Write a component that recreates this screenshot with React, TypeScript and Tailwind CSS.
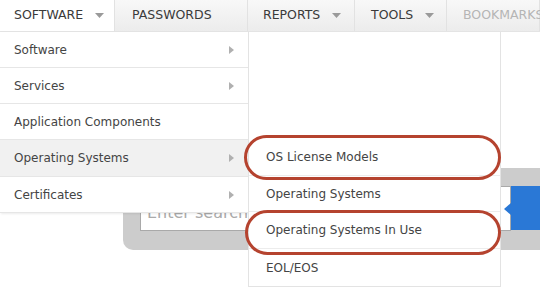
import React from "react";

const font = { fontFamily: '"DejaVu Sans", Verdana, sans-serif' };

function DownCaret() {
  return (
    <svg width="9" height="6" viewBox="0 0 9 6" className="ml-[12px]">
      <path d="M0 0 L9 0 L4.5 5 Z" fill="#9a9a9a" />
    </svg>
  );
}

function RightCaret() {
  return (
    <svg width="5" height="8" viewBox="0 0 5 8">
      <path d="M0 0 L5 4 L0 8 Z" fill="#b0b0b0" />
    </svg>
  );
}

function NavItem({
  label,
  caret,
  active,
  muted,
  width,
  pad,
}: {
  label: string;
  caret?: boolean;
  active?: boolean;
  muted?: boolean;
  width: string;
  pad: string;
}) {
  return (
    <div
      className={`flex items-center shrink-0 h-full border-r border-[#e2e2e2] ${pad} ${width} ${
        active ? "bg-white" : ""
      } ${muted ? "text-[#b5b5b5]" : "text-[#3a3a3a]"}`}
    >
      <span className="text-[12.5px] whitespace-nowrap">{label}</span>
      {caret && <DownCaret />}
    </div>
  );
}

const mainItems = [
  { label: "Software", sub: true, h: "h-[36px]" },
  { label: "Services", sub: true, h: "h-[36px]" },
  { label: "Application Components", sub: false, h: "h-[36px]" },
  { label: "Operating Systems", sub: true, h: "h-[37px]", hover: true },
  { label: "Certificates", sub: true, h: "h-[36px]" },
];

const subItems = [
  { label: "OS License Models", h: "h-[37px]" },
  { label: "Operating Systems", h: "h-[36px]" },
  { label: "Operating Systems In Use", h: "h-[37px]" },
  { label: "EOL/EOS", h: "h-[37px]" },
];

export default function App() {
  return (
    <div className="relative w-[540px] h-[295px] overflow-hidden bg-white" style={font}>
      {/* top navigation */}
      <div className="flex h-[32px] bg-gradient-to-b from-[#f8f8f8] to-[#ececec] border-b border-[#e4e4e4]">
        <NavItem label="SOFTWARE" caret active width="w-[115px]" pad="pl-[14px]" />
        <NavItem label="PASSWORDS" width="w-[133px]" pad="pl-[17px]" />
        <NavItem label="REPORTS" caret width="w-[107px]" pad="pl-[15px]" />
        <NavItem label="TOOLS" caret width="w-[92px]" pad="pl-[16px]" />
        <NavItem label="BOOKMARKS" muted width="w-[93px]" pad="pl-[16px]" />
      </div>

      {/* page content behind the menus */}
      <div className="pt-[136px] pl-[123px]">
        <div className="h-[82px] bg-[#cccccc] rounded-bl-[10px] pt-[18px] pl-[17px] flex">
          <div className="w-[380px] h-[45px] bg-white border border-[#a9a9a9] flex items-end pl-[6px] pb-[9px]">
            <span className="text-[16px] leading-[16px] text-[#aaa]">Enter search term</span>
          </div>
          <div className="relative w-[30px] h-[44px] bg-[#2a78d6]">
            <div className="absolute left-[-7px] top-[17px] w-0 h-0 border-y-[6px] border-y-transparent border-r-[7px] border-r-[#2a78d6]" />
          </div>
        </div>
      </div>

      {/* first level dropdown */}
      <div className="absolute left-0 top-[32px] w-[248px] bg-white shadow-[1px_1px_2px_rgba(0,0,0,0.08)]">
        {mainItems.map((it) => (
          <div
            key={it.label}
            className={`flex items-center justify-between pl-[14px] pr-[14px] border-b border-[#e6e6e6] text-[12px] text-[#444] ${it.h} ${
              it.hover ? "bg-[#f1f1f1]" : ""
            }`}
          >
            <span>{it.label}</span>
            {it.sub && <RightCaret />}
          </div>
        ))}
      </div>

      {/* second level dropdown */}
      <div className="absolute left-[248px] top-[32px] w-[253px] h-[255px] bg-white border-l border-r border-b border-[#e3e3e3] flex flex-col justify-end">
        {subItems.map((it, i) => (
          <div
            key={it.label}
            className={`flex items-center pl-[17px] text-[12px] text-[#444] ${it.h} ${
              i < subItems.length - 1 ? "border-b border-[#ececec]" : ""
            }`}
          >
            {it.label}
          </div>
        ))}
      </div>

      {/* annotation ellipses */}
      <div className="absolute left-[244px] top-[135px] w-[257px] h-[45px] rounded-full border-[3px] border-[#b5432f]" />
      <div className="absolute left-[245px] top-[210px] w-[256px] h-[45px] rounded-full border-[3px] border-[#b5432f]" />
    </div>
  );
}
